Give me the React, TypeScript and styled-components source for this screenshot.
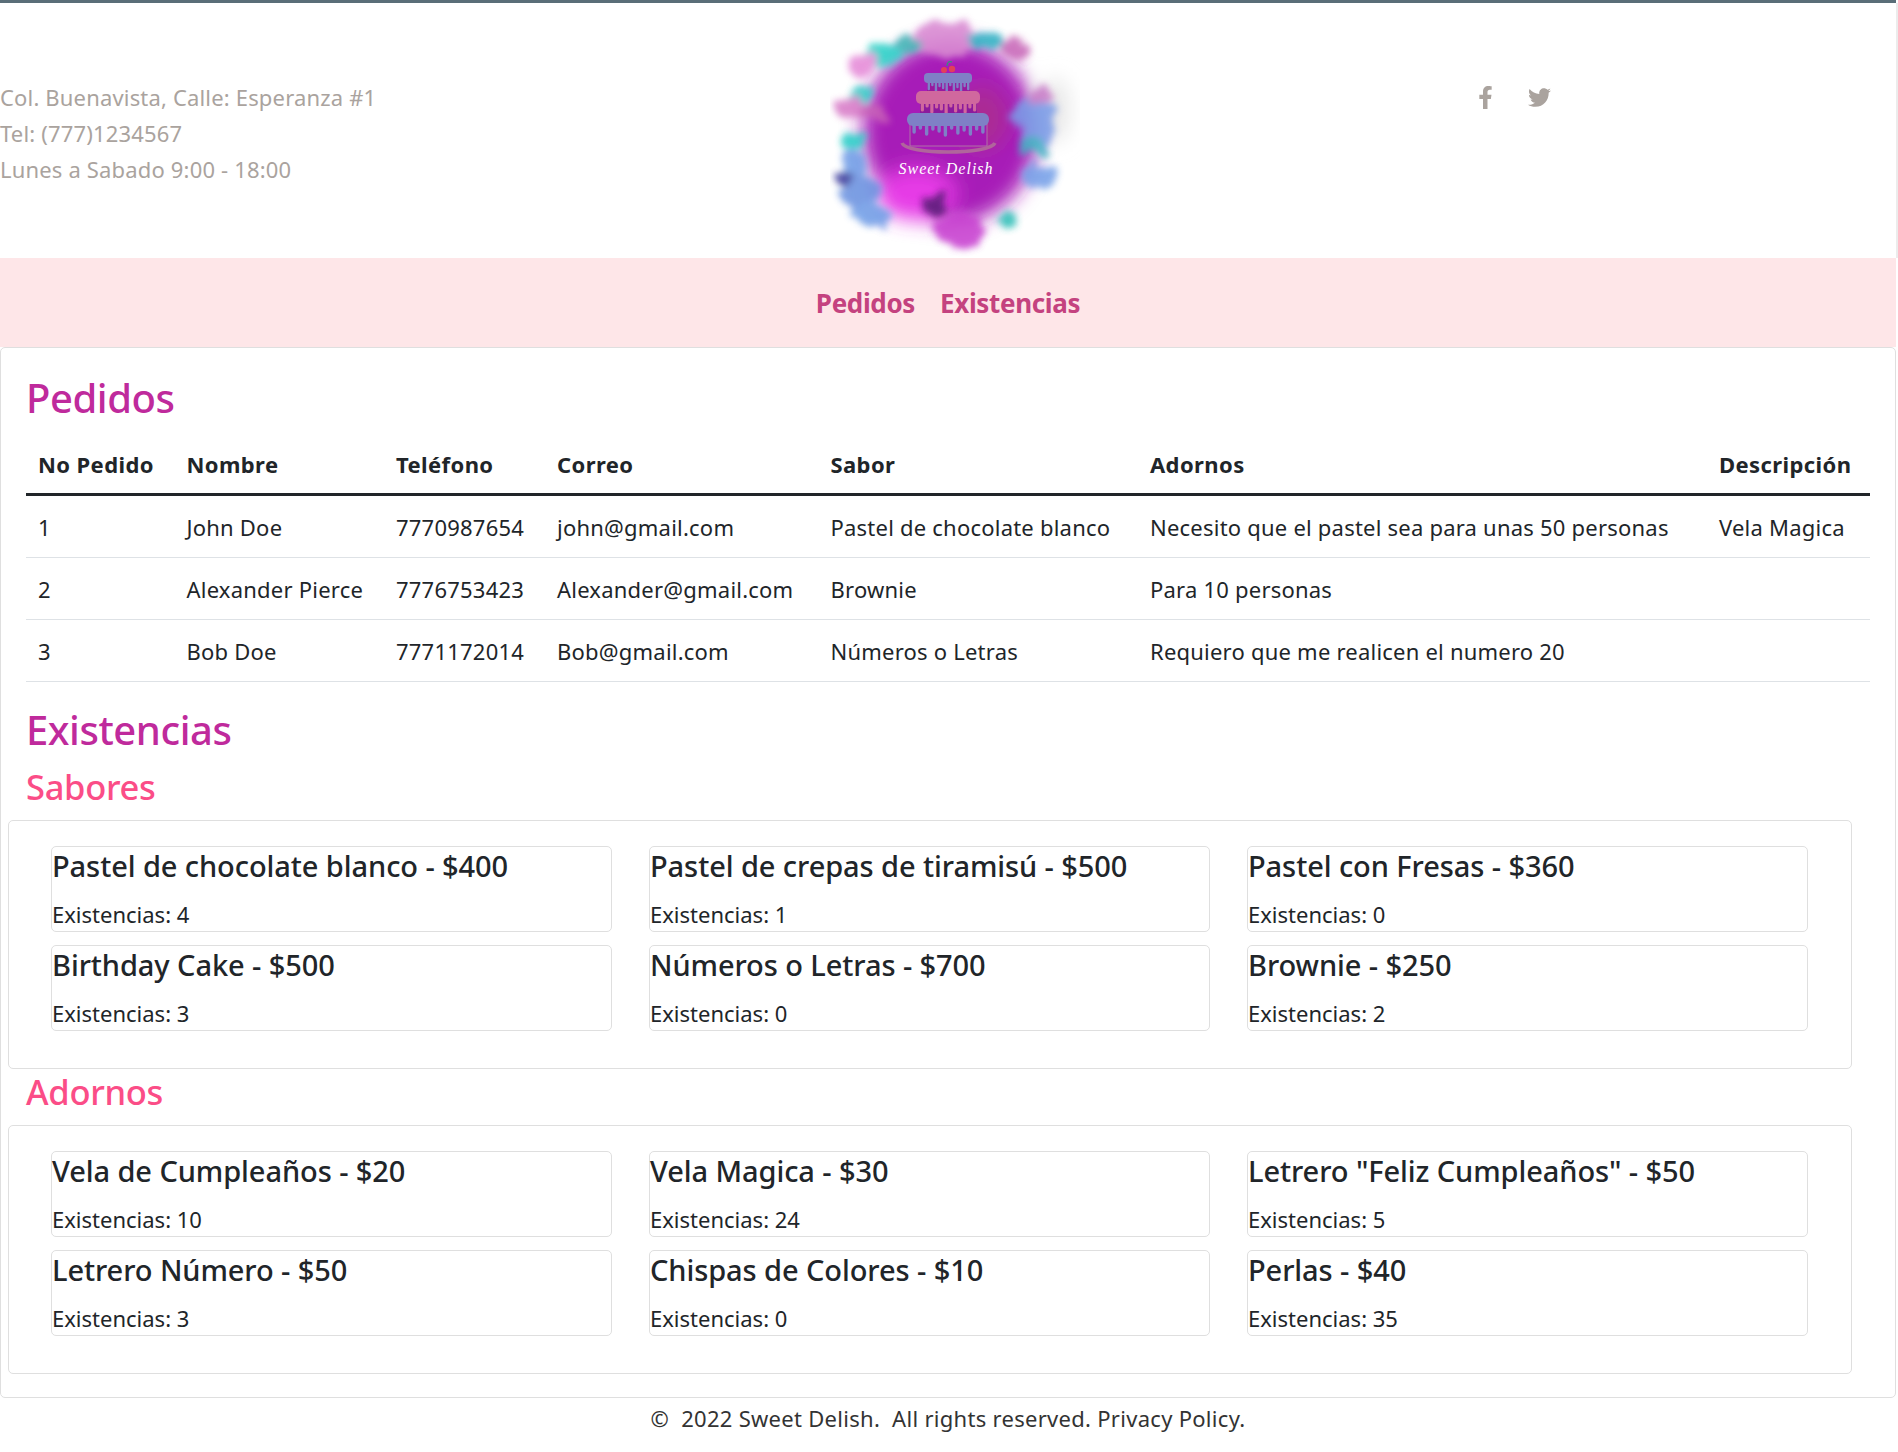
import { createGlobalStyle, styled } from 'styled-components';
import { FaFacebookF, FaTwitter } from 'react-icons/fa';

const GlobalStyle = createGlobalStyle`
  html, body { margin: 0; padding: 0; background: #fff; }
  body {
    font-family: "Noto Sans", "Open Sans", sans-serif;
    font-size: 22px;
    color: #212529;
  }
`;

const Page = styled.div`
  width: 1896px;
  min-height: 1452px;
  border-top: 3px solid #5a6e78;
  box-sizing: border-box;
`;

const Header = styled.header`
  height: 255px;
  width: 1896px;
  border-right: 2px solid #ececec;
  display: grid;
  grid-template-columns: 830px 250px 1fr;
`;

const Contact = styled.div`
  padding-top: 76px;
  color: #aaa39e;
  line-height: 36px;
  letter-spacing: 0.17px;
`;

const LogoBox = styled.div`
  padding-top: 5px;
`;

const Social = styled.div`
  display: flex;
  gap: 31px;
  padding: 83px 0 0 394px;
  color: #aaa39e;
  font-size: 23px;
`;

const Nav = styled.nav`
  height: 89px;
  background: #fee6e8;
  display: flex;
  align-items: center;
  justify-content: center;
  gap: 25px;
`;

const NavLink = styled.a`
  color: #c4427f;
  font-size: 26px;
  font-weight: 700;
  letter-spacing: -0.35px;
`;

const Card = styled.main`
  height: 1051px;
  box-sizing: border-box;
  border: 1px solid #dfdfdf;
  border-radius: 5px;
`;

const Title = styled.h2<{ $h: number }>`
  margin: 0;
  padding-left: 25px;
  color: #bf2a9c;
  font-size: 40px;
  font-weight: 500;
  line-height: 46px;
  letter-spacing: -0.45px;
  height: ${(p) => p.$h}px;
  display: flex;
  align-items: flex-end;
`;

const Subtitle = styled.h3<{ $h: number }>`
  margin: 0;
  padding: 0 0 10px 25px;
  box-sizing: border-box;
  height: ${(p) => p.$h}px;
  color: #fb4d87;
  font-size: 34.5px;
  font-weight: 500;
  line-height: 46px;
  letter-spacing: -0.3px;
  display: flex;
  align-items: flex-end;
`;

const Table = styled.table`
  margin-left: 25px;
  width: 1844px;
  table-layout: fixed;
  border-collapse: collapse;
  letter-spacing: 0.22px;
`;

const Th = styled.th`
  height: 73.5px;
  padding: 14px 0 0 12px;
  box-sizing: border-box;
  text-align: left;
  font-weight: 700;
  letter-spacing: 0.4px;
  border-bottom: 3px solid #212529;
  white-space: nowrap;
`;

const Td = styled.td`
  height: 61px;
  padding: 0 0 0 12px;
  border-bottom: 1px solid #dee2e6;
  white-space: nowrap;
`;

const Panel = styled.section`
  margin-left: 7px;
  width: 1844px;
  box-sizing: border-box;
  border: 1px solid #dfdfdf;
  border-radius: 5px;
  padding: 25px 0 0 42px;
  height: 249px;
  display: grid;
  grid-template-columns: repeat(3, 561px);
  grid-auto-rows: 86px;
  column-gap: 37px;
  row-gap: 13px;
`;

const Item = styled.article`
  box-sizing: border-box;
  border: 1px solid #dfdfdf;
  border-radius: 5px;
`;

const ItemName = styled.h4`
  margin: 0;
  font-size: 29px;
  font-weight: 500;
  line-height: 38px;
  letter-spacing: -0.08px;
  height: 50px;
`;

const ItemStock = styled.p`
  margin: 0;
  line-height: 34px;
`;

const Footer = styled.footer`
  text-align: center;
  padding-top: 5px;
  line-height: 30px;
  letter-spacing: 0.29px;
  color: #333;
  white-space: pre;
`;

const CLOUDS: [number, number, number, number, string][] = [
  [145, 38, 32, 18, '#d98ad2'],
  [187, 42, 18, 12, '#2fb4c4'],
  [217, 50, 15, 11, '#c868b8'],
  [85, 54, 20, 10, '#2ad2c8'],
  [108, 42, 11, 9, '#3fb5b5'],
  [62, 66, 16, 11, '#e58ad8'],
  [60, 98, 11, 9, '#2fd0c8'],
  [52, 108, 17, 10, '#d87cc8'],
  [75, 113, 15, 9, '#c860b8'],
  [53, 143, 11, 8, '#25cfc8'],
  [55, 165, 14, 14, '#6f9de6'],
  [45, 178, 9, 7, '#3b3a9c'],
  [60, 192, 20, 16, '#6b92e0'],
  [72, 214, 18, 10, '#6f9de6'],
  [135, 205, 13, 11, '#5a1a78'],
  [160, 230, 26, 16, '#c83fd0'],
  [208, 220, 10, 8, '#2fc0b8'],
  [235, 112, 22, 16, '#7a9ce8'],
  [240, 133, 16, 14, '#7a9ce8'],
  [232, 147, 16, 9, '#3fb5c5'],
  [240, 178, 17, 14, '#76a0e8'],
  [240, 95, 12, 9, '#c87cc8'],
];

const Drips = ({ x0, x1, y, color, w }: { x0: number; x1: number; y: number; color: string; w: number }) => {
  const lens = [7, 3, 9, 4, 6, 10, 3, 8, 5, 9, 4, 7];
  const step = (x1 - x0) / lens.length;
  return (
    <g stroke={color} strokeWidth={w} strokeLinecap="round">
      {lens.map((l, i) => (
        <line key={i} x1={x0 + step * (i + 0.5)} x2={x0 + step * (i + 0.5)} y1={y} y2={y + l} />
      ))}
    </g>
  );
};

const Logo = () => (
  <svg width="250" height="250" viewBox="30 8 250 250">
    <defs>
      <filter id="big" x="-30%" y="-30%" width="160%" height="160%">
        <feGaussianBlur stdDeviation="10" />
      </filter>
      <filter id="soft" x="-20%" y="-20%" width="140%" height="140%">
        <feTurbulence type="fractalNoise" baseFrequency="0.05" numOctaves="3" seed="7" />
        <feDisplacementMap in="SourceGraphic" scale="20" xChannelSelector="R" yChannelSelector="G" />
        <feGaussianBlur stdDeviation="3.5" />
      </filter>
    </defs>
    <g filter="url(#big)">
      <ellipse cx="150" cy="132" rx="88" ry="92" fill="#a71cb8" />
      <ellipse cx="116" cy="194" rx="40" ry="26" fill="#e63ae6" />
      <ellipse cx="182" cy="118" rx="26" ry="32" fill="#ab2c94" />
      <ellipse cx="255" cy="110" rx="14" ry="32" fill="#e6e6e6" />
    </g>
    <g filter="url(#soft)" opacity="0.88">
      {CLOUDS.map(([cx, cy, rx, ry, fill], i) => (
        <ellipse key={i} cx={cx} cy={cy} rx={rx} ry={ry} fill={fill} />
      ))}
    </g>
    <path d="M147 66c0-4 2-5 5-4" stroke="#2a9a78" strokeWidth="1.2" fill="none" />
    <circle cx="144" cy="70" r="3" fill="#e2405a" />
    <circle cx="152" cy="69" r="3.2" fill="#e2405a" />
    <rect x="127" y="78" width="43" height="14" fill="#98189e" />
    <rect x="124" y="73" width="48" height="10" rx="4" fill="#7f80c6" />
    <Drips x0={127} x1={170} y={82} color="#7f80c6" w={2.4} />
    <rect x="120" y="100" width="57" height="16" rx="2" fill="#8c1a9c" />
    <rect x="116" y="91" width="64" height="13" rx="5" fill="#d0689e" />
    <Drips x0={120} x1={177} y={103} color="#d0689e" w={3.2} />
    <rect x="110" y="122" width="77" height="24" fill="#a21ab0" stroke="#b070a8" strokeWidth="1" />
    <rect x="107" y="113" width="82" height="13" rx="6" fill="#7f80c6" />
    <Drips x0={111} x1={186} y={125} color="#7f80c6" w={3.4} />
    <path d="M102 143c4 12 88 12 93 0" fill="none" stroke="#b0659c" strokeWidth="3.5" />
    <text x="146" y="174" textAnchor="middle" fill="#fff" fontFamily="'Liberation Serif', serif" fontStyle="italic" fontSize="16" letterSpacing="1">
      Sweet Delish
    </text>
  </svg>
);

const COL_WIDTHS = [148.5, 209.5, 161, 273.5, 319.5, 569, 163];

const ORDERS = [
  ['1', 'John Doe', '7770987654', 'john@gmail.com', 'Pastel de chocolate blanco', 'Necesito que el pastel sea para unas 50 personas', 'Vela Magica'],
  ['2', 'Alexander Pierce', '7776753423', 'Alexander@gmail.com', 'Brownie', 'Para 10 personas', ''],
  ['3', 'Bob Doe', '7771172014', 'Bob@gmail.com', 'Números o Letras', 'Requiero que me realicen el numero 20', ''],
];

const FLAVORS = [
  ['Pastel de chocolate blanco - $400', 4],
  ['Pastel de crepas de tiramisú - $500', 1],
  ['Pastel con Fresas - $360', 0],
  ['Birthday Cake - $500', 3],
  ['Números o Letras - $700', 0],
  ['Brownie - $250', 2],
] as const;

const EXTRAS = [
  ['Vela de Cumpleaños - $20', 10],
  ['Vela Magica - $30', 24],
  ['Letrero "Feliz Cumpleaños" - $50', 5],
  ['Letrero Número - $50', 3],
  ['Chispas de Colores - $10', 0],
  ['Perlas - $40', 35],
] as const;

const StockPanel = ({ items }: { items: readonly (readonly [string, number])[] }) => (
  <Panel>
    {items.map(([name, stock]) => (
      <Item key={name}>
        <ItemName>{name}</ItemName>
        <ItemStock>Existencias: {stock}</ItemStock>
      </Item>
    ))}
  </Panel>
);

export default function App() {
  return (
    <Page>
      <GlobalStyle />
      <Header>
        <Contact>
          Col. Buenavista, Calle: Esperanza #1
          <br />
          Tel: (777)1234567
          <br />
          Lunes a Sabado 9:00 - 18:00
        </Contact>
        <LogoBox>
          <Logo />
        </LogoBox>
        <Social>
          <FaFacebookF />
          <FaTwitter />
        </Social>
      </Header>
      <Nav>
        <NavLink>Pedidos</NavLink>
        <NavLink>Existencias</NavLink>
      </Nav>
      <Card>
        <Title $h={73}>Pedidos</Title>
        <Table>
          <colgroup>
            {COL_WIDTHS.map((w) => (
              <col key={w} width={w} />
            ))}
          </colgroup>
          <thead>
            <tr>
              {['No Pedido', 'Nombre', 'Teléfono', 'Correo', 'Sabor', 'Adornos', 'Descripción'].map((h) => (
                <Th key={h}>{h}</Th>
              ))}
            </tr>
          </thead>
          <tbody>
            {ORDERS.map((row) => (
              <tr key={row[0]}>
                {row.map((cell, i) => (
                  <Td key={i}>{cell}</Td>
                ))}
              </tr>
            ))}
          </tbody>
        </Table>
        <Title $h={71}>Existencias</Title>
        <Subtitle $h={67}>Sabores</Subtitle>
        <StockPanel items={FLAVORS} />
        <Subtitle $h={56}>Adornos</Subtitle>
        <StockPanel items={EXTRAS} />
      </Card>
      <Footer>©  2022 Sweet Delish.  All rights reserved. Privacy Policy.</Footer>
    </Page>
  );
}
